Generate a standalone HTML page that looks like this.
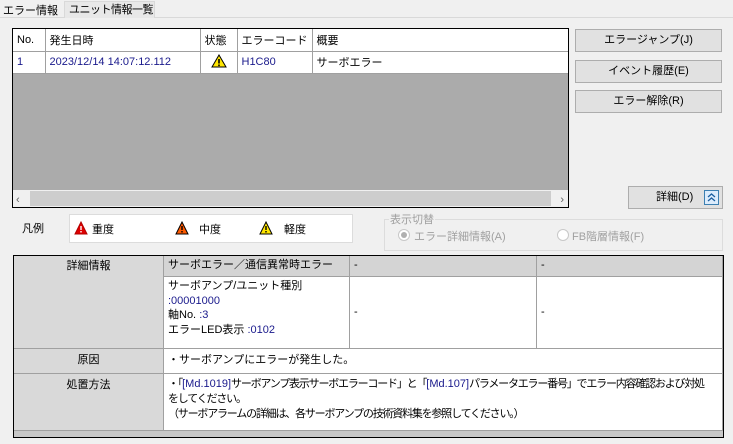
<!DOCTYPE html>
<html><head><meta charset="utf-8"><style>
*{box-sizing:border-box;margin:0;padding:0}
body{width:733px;height:444px;background:#f0f0f0;font-family:"Liberation Sans","Noto Sans CJK JP",sans-serif;font-size:11px;color:#000;position:relative;overflow:hidden;white-space:nowrap}
.a{position:absolute}
.btn{position:absolute;background:#e1e1e1;border:1px solid #adadad;text-align:center;font-size:11px;line-height:21px}
.grid td{border-right:1px solid #a0a0a0;border-bottom:1px solid #a0a0a0;padding:0 4px;height:22px;white-space:nowrap;font-size:11px}
.c{position:absolute;border-right:1px solid #a0a0a0;border-bottom:1px solid #a0a0a0;padding:2px 4px;line-height:15px;font-size:11px;overflow:hidden}
.h{background:#d9d9d9;text-align:center}
.g{background:#d4d4d4}
.w{background:#fff}
.bl{color:#1a1a8c}
</style></head><body>
<div class="a" style="left:0;top:17px;width:733px;border-top:1px solid #d9d9d9"></div>
<div class="a" style="left:3px;top:2px">エラー情報</div>
<div class="a" style="left:64px;top:1px;width:91px;height:17px;border:1px solid #d9d9d9;border-bottom:none;background:#e8e8e8;padding-left:4px;line-height:16px;letter-spacing:-0.5px">ユニット情報一覧</div>

<div class="a" style="left:12px;top:28px;width:557px;height:180px;border:1px solid #000;background:#ababab">
<table class="grid" style="border-collapse:collapse;background:#fff;width:555px">
<tr><td style="width:32px">No.</td><td style="width:155px">発生日時</td><td style="width:37px">状態</td><td style="width:67px">エラーコード</td><td style="border-right:none">概要</td></tr>
<tr><td style="color:#1a1a8c">1</td><td class="bl">2023/12/14 14:07:12.112</td><td style="text-align:center"><svg width="16" height="14" viewBox="0 0 16 14"><path d="M8 1L15 13H1Z" fill="#ffe600" stroke="#000"/><rect x="7.2" y="5" width="1.6" height="4.5" fill="#000"/><rect x="7.2" y="10.5" width="1.6" height="1.6" fill="#000"/></svg></td><td class="bl">H1C80</td><td style="border-right:none">サーボエラー</td></tr>
</table>
<div class="a" style="left:0;bottom:0;width:555px;height:17px;background:#f0f0f0"></div>
<div class="a" style="left:17px;bottom:1px;width:521px;height:15px;background:#cdcdcd"></div>
<div class="a" style="left:3px;bottom:1px;color:#606060;font-size:11px">‹</div>
<div class="a" style="right:4px;bottom:1px;color:#606060;font-size:11px">›</div>
</div>

<div class="btn" style="left:575px;top:29px;width:147px;height:23px">エラージャンプ(J)</div>
<div class="btn" style="left:575px;top:60px;width:147px;height:23px">イベント履歴(E)</div>
<div class="btn" style="left:575px;top:90px;width:147px;height:23px">エラー解除(R)</div>
<div class="btn" style="left:628px;top:186px;width:95px;height:23px;text-align:left;padding-left:27px">詳細(D)</div>
<div class="a" style="left:704px;top:190px;width:15px;height:15px;border:1px solid #3c7fb1;background:#dcecfc"><svg width="13" height="13" viewBox="0 0 13 13"><path d="M3 6L6.5 3L10 6M3 10L6.5 7L10 10" fill="none" stroke="#1b5fa0" stroke-width="1.3"/></svg></div>

<div class="a" style="left:22px;top:220px">凡例</div>
<div class="a" style="left:69px;top:214px;width:284px;height:29px;border:1px solid #dcdcdc;background:#fff"></div>
<svg class="a" style="left:74px;top:221px" width="14" height="14"><path d="M7 1L13 13H1Z" fill="#e00000" stroke="#b00000"/><rect x="6.3" y="5" width="1.4" height="4" fill="#fff"/><rect x="6.3" y="10" width="1.4" height="1.5" fill="#fff"/></svg>
<div class="a" style="left:92px;top:221px">重度</div>
<svg class="a" style="left:175px;top:221px" width="14" height="14"><path d="M7 1L13 13H1Z" fill="#ff5a00" stroke="#000"/><rect x="6.3" y="5" width="1.4" height="4" fill="#000"/><rect x="6.3" y="10" width="1.4" height="1.5" fill="#000"/></svg>
<div class="a" style="left:199px;top:221px">中度</div>
<svg class="a" style="left:259px;top:221px" width="14" height="14"><path d="M7 1L13 13H1Z" fill="#ffe600" stroke="#000"/><rect x="6.3" y="5" width="1.4" height="4" fill="#000"/><rect x="6.3" y="10" width="1.4" height="1.5" fill="#000"/></svg>
<div class="a" style="left:284px;top:221px">軽度</div>

<div class="a" style="left:384px;top:219px;width:339px;height:32px;border:1px solid #dcdcdc"></div>
<div class="a" style="left:389px;top:211px;background:#f0f0f0;color:#a0a0a0;padding:0 1px">表示切替</div>
<div class="a" style="left:398px;top:229px;width:12px;height:12px;border-radius:50%;border:1px solid #c8c8c8;background:#fff"><div style="margin:2px;width:6px;height:6px;border-radius:50%;background:#b0b0b0"></div></div>
<div class="a" style="left:414px;top:228px;color:#a0a0a0">エラー詳細情報(A)</div>
<div class="a" style="left:557px;top:229px;width:12px;height:12px;border-radius:50%;border:1px solid #c8c8c8;background:#fff"></div>
<div class="a" style="left:572px;top:228px;color:#a0a0a0">FB階層情報(F)</div>

<div class="a" style="left:13px;top:255px;width:711px;height:183px;border:1px solid #000;background:#c8c8c8"></div>
<div class="c h" style="left:14px;top:256px;width:150px;height:93px;padding-top:3px">詳細情報</div>
<div class="c g" style="left:164px;top:256px;width:186px;height:21px">サーボエラー／通信異常時エラー</div>
<div class="c g" style="left:350px;top:256px;width:187px;height:21px">-</div>
<div class="c g" style="left:537px;top:256px;width:186px;height:21px">-</div>
<div class="c w" style="left:164px;top:277px;width:186px;height:72px;line-height:14.5px">サーボアンプ/ユニット種別<br><span class="bl">:00001000</span><br>軸No. <span class="bl">:3</span><br>エラーLED表示 <span class="bl">:0102</span></div>
<div class="c w" style="left:350px;top:277px;width:187px;height:72px;padding-top:28px">-</div>
<div class="c w" style="left:537px;top:277px;width:186px;height:72px;padding-top:28px">-</div>
<div class="c h" style="left:14px;top:349px;width:150px;height:25px;padding-top:4px">原因</div>
<div class="c w" style="left:164px;top:349px;width:559px;height:25px;padding-top:4px">・サーボアンプにエラーが発生した。</div>
<div class="c h" style="left:14px;top:374px;width:150px;height:57px;padding-top:4px">処置方法</div>
<div class="c w" style="left:164px;top:374px;width:559px;height:57px;padding-top:3px;line-height:15px;letter-spacing:-1.2px">・「<span class="bl" style="letter-spacing:0">[Md.1019]</span>サーボアンプ表示サーボエラーコード」と「<span class="bl" style="letter-spacing:0">[Md.107]</span>パラメータエラー番号」でエラー内容確認および対処<br>をしてください。<br>（サーボアラームの詳細は、各サーボアンプの技術資料集を参照してください。）</div>
</body></html>
